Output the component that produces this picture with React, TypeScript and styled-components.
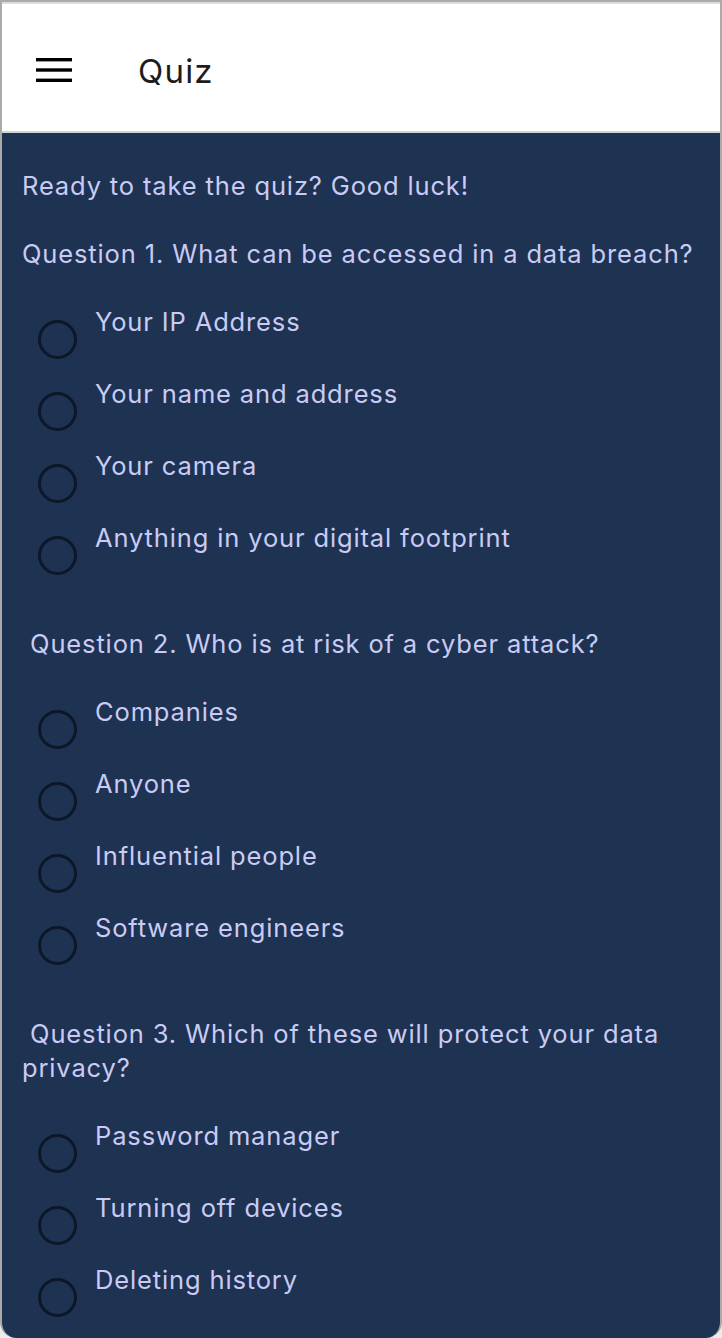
import React from "react";
import styled, { createGlobalStyle } from "styled-components";

const Global = createGlobalStyle`
  html, body { margin: 0; padding: 0; background: #ececec; }
  * { box-sizing: border-box; }
`;

const Frame = styled.div`
  width: 722px;
  height: 1338px;
  display: flex;
  flex-direction: column;
  border: 2px solid #aaaaaa;
  border-bottom: none;
  border-radius: 0 0 16px 16px;
  overflow: hidden;
  background: #1e3252;
  font-family: Inter, "Noto Sans", sans-serif;
`;

const Header = styled.header`
  height: 131px;
  flex-shrink: 0;
  display: flex;
  align-items: center;
  padding: 0 0 0 34px;
  gap: 66px;
  background: #ffffff;
  border-top: 2px solid #dcdcdc;
  border-bottom: 2px solid #d2d3d6;
`;

const Menu = styled.svg`
  width: 36px;
  height: 24px;
  display: block;
  margin-top: 4px;
`;

const Title = styled.h1`
  margin: 0;
  margin-top: 6px;
  font-size: 33px;
  font-weight: 400;
  color: #1c1c1c;
  letter-spacing: 1.2px;
`;

const Content = styled.main`
  padding: 36px 20px 0 20px;
  display: flex;
  flex-direction: column;
  color: #c9cbf4;
`;

const Line = styled.p`
  margin: 0 0 34px 0;
  font-size: 25.5px;
  letter-spacing: 0.86px;
  line-height: 34px;
  white-space: pre-wrap;
`;

const Options = styled.div`
  display: flex;
  flex-direction: column;
  margin-bottom: 34px;
`;

const Option = styled.label`
  height: 72px;
  display: flex;
  align-items: flex-start;
  padding-left: 16px;
  gap: 18px;
  cursor: pointer;
`;

const Radio = styled.span`
  width: 39px;
  height: 39px;
  margin-top: 15px;
  border-radius: 50%;
  border: 3.5px solid #0c1727;
  flex-shrink: 0;
`;

const OptionText = styled.span`
  font-size: 25.5px;
  letter-spacing: 0.86px;
  line-height: 34px;
`;

const quiz = [
  {
    q: "Question 1. What can be accessed in a data breach?",
    options: [
      "Your IP Address",
      "Your name and address",
      "Your camera",
      "Anything in your digital footprint",
    ],
  },
  {
    q: " Question 2. Who is at risk of a cyber attack?",
    options: ["Companies", "Anyone", "Influential people", "Software engineers"],
  },
  {
    q: " Question 3. Which of these will protect your data privacy?",
    options: ["Password manager", "Turning off devices", "Deleting history"],
  },
];

export default function App() {
  return (
    <>
      <Global />
      <Frame>
        <Header>
          <Menu viewBox="0 0 36 24">
            <rect x="0" y="0" width="36" height="3.4" fill="#000" />
            <rect x="0" y="10.3" width="36" height="3.4" fill="#000" />
            <rect x="0" y="20.6" width="36" height="3.4" fill="#000" />
          </Menu>
          <Title>Quiz</Title>
        </Header>
        <Content>
          <Line>Ready to take the quiz? Good luck!</Line>
          {quiz.map((s) => (
            <React.Fragment key={s.q}>
              <Line>{s.q}</Line>
              <Options>
                {s.options.map((o) => (
                  <Option key={o}>
                    <Radio />
                    <OptionText>{o}</OptionText>
                  </Option>
                ))}
              </Options>
            </React.Fragment>
          ))}
        </Content>
      </Frame>
    </>
  );
}
